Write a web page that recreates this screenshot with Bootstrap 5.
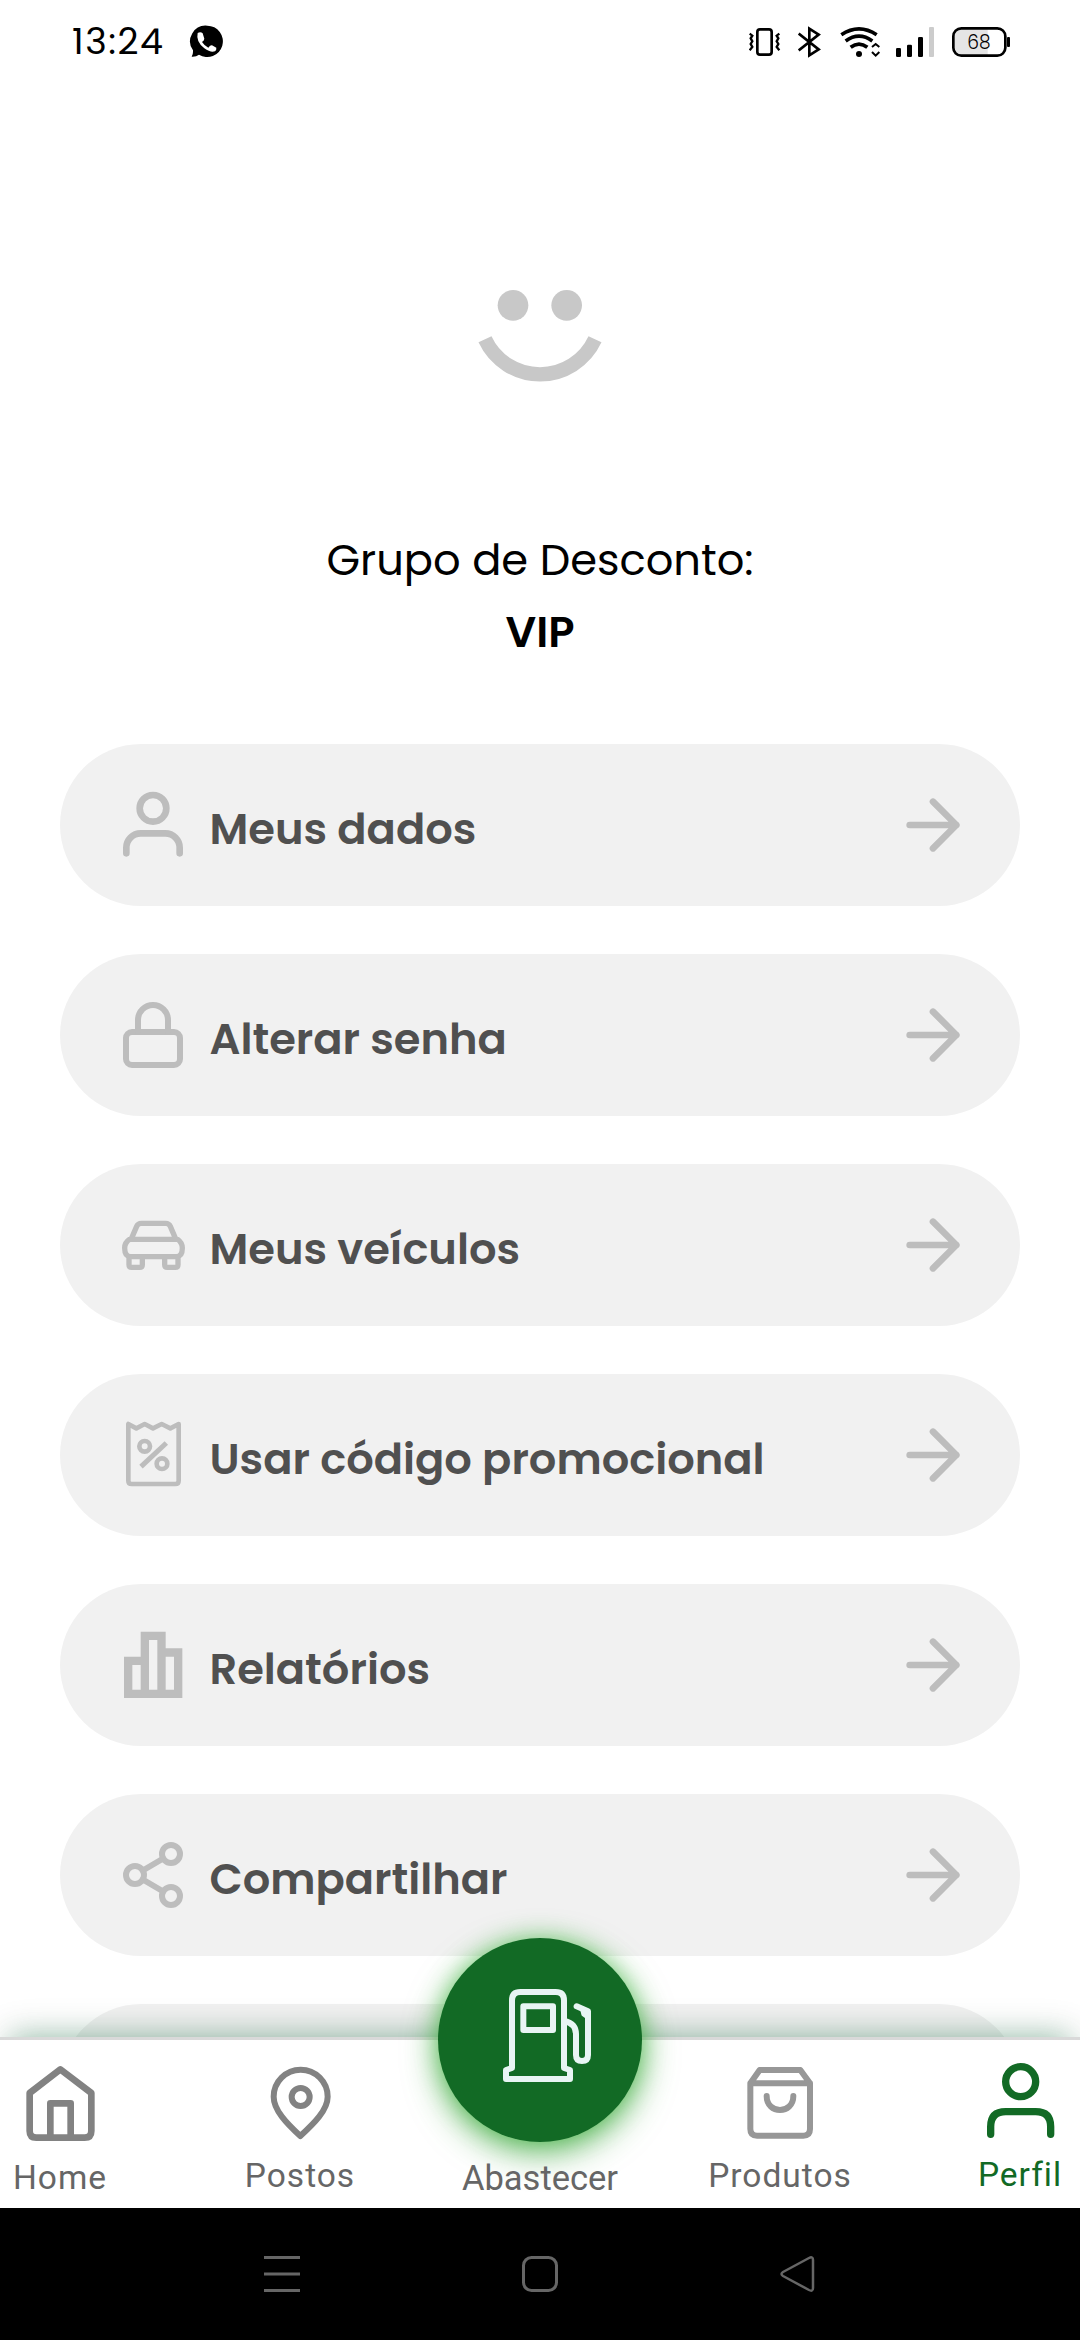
<!DOCTYPE html>
<html lang="pt-BR">
<head>
<meta charset="utf-8">
<meta name="viewport" content="width=device-width, initial-scale=1">
<title>Perfil</title>
<link href="https://cdn.jsdelivr.net/npm/bootstrap@5.3.0/dist/css/bootstrap.min.css" rel="stylesheet">
<style>
body{width:1080px;height:2340px;overflow:hidden;background:#fff;color:#000;font-family:Poppins,Inter,sans-serif}
svg{display:block;flex:none}
.ln{fill:none;stroke:currentColor;stroke-width:2;stroke-linecap:round;stroke-linejoin:round}
.status-bar{height:84px;padding:0 68px 0 72px}
.clock{width:91px;font:400 36.5px/84px Poppins,Inter,sans-serif;letter-spacing:1.5px;white-space:nowrap}
.chat{margin-left:26px}
.page-body{overflow:hidden}
.smile{margin-top:176px}
.group-label{font-size:43.2px;line-height:72px;margin-top:114px;font-weight:400}
.group-name{font-size:43.2px;line-height:72px;font-weight:600}
.menu{padding:0 60px;gap:48px;margin-top:76px}
.menu-row{height:162px;border-radius:81px;background:#f1f1f1;color:#bdbdbd;padding:0 47px 0 53px;text-decoration:none;flex:none}
.menu-text{color:#505050;font-size:43.2px;font-weight:600;line-height:60px;padding-top:8px;margin-left:16.5px;white-space:nowrap}
.tab-bar{height:171px;border-top:3px solid #d9d9d9;background:#fff;box-shadow:0 -12px 28px -12px rgba(0,110,55,.38),0 -4px 40px rgba(0,0,0,.08)}
.tab{width:120px;padding-top:20px;color:#828282}
.tab span{font:400 33.5px/40px Roboto,sans-serif;color:#666;letter-spacing:1px;white-space:nowrap;padding-top:5.5px}
.tab .home-label{padding-top:7.5px}
.tab .fuel-label{font-size:34.5px;letter-spacing:0;padding-top:8px;position:relative}
.tab .profile-label{padding-top:4.5px;color:#126a25}
.fab{left:438px;top:-102px;width:204px;height:204px;background:#126a25;color:#e8f5f4;box-shadow:0 10px 34px rgba(30,150,30,.65),0 0 22px rgba(70,200,70,.5)}
.sys-bar{height:132px;background:#000;color:#666;gap:178px}
</style>
</head>
<body class="d-flex flex-column position-relative">
<header class="status-bar d-flex align-items-start flex-shrink-0">
  <span class="clock">13:24</span>
  <svg class="chat" width="36" height="90" viewBox="446 0 108 270"><path fill="#000" d="M501 77a47 47 0 1 1-25 87q-9 7-22 6 5-8 4-19A47 47 0 0 1 501 77z"/><path fill="#fff" d="M472 99q9-5 15 1l5 16q0 5-7 10 8 12 19 17 6-8 11-7l13 7q1 7-4 11-13 5-32-9-26-20-20-46z"/></svg>
  <div class="d-flex ms-auto">
    <svg width="49" height="90" viewBox="90 0 147 270" fill="none" stroke="#000"><rect x="115" y="88" width="43" height="76" rx="8" stroke-width="8"/><path stroke-width="7" d="M92 101l8 6-5 8 5 9-5 8 5 9-8 10M181 101l-8 6 5 8-5 9 5 8-5 9 8 10"/></svg>
    <svg width="42" height="90" viewBox="237 0 126 270" fill="none" stroke="#000" stroke-width="8"><path d="M239 101l60 47-28 18V86l28 18-60 47"/></svg>
    <svg width="56" height="90" viewBox="363 0 168 270" fill="none" stroke="#000" stroke-width="11"><path d="M367 104q53-35 106 0M380 123q40-29 80 0M395 142q25-19 50 0"/><circle cx="420" cy="162" r="9" fill="#000" stroke="none"/><path stroke-width="6" d="M459 141l11-9 11 9M459 156l11 11 11-11"/></svg>
    <svg width="56" height="90" viewBox="531 0 168 270"><g fill="#000"><rect x="531" y="144" width="15" height="27" rx="4"/><rect x="564" y="134" width="15" height="37" rx="4"/><rect x="597" y="111" width="15" height="60" rx="4"/></g><rect x="630" y="81" width="15" height="90" rx="3" fill="#ccc"/></svg>
    <svg width="60" height="90" viewBox="699 0 180 270"><rect x="703" y="85" width="156" height="82" rx="24" fill="#fff"/><path d="M806 85h-79q-24 0-24 24v34q0 24 24 24h79z" fill="#e5e5e5"/><rect x="703" y="85" width="156" height="82" rx="24" fill="none" stroke="#000" stroke-width="8"/><rect x="864" y="111" width="9" height="30" rx="3"/><text x="780" y="148" text-anchor="middle" font-family="Poppins, Lato, sans-serif" font-weight="300" font-size="61" textLength="70" lengthAdjust="spacingAndGlyphs">68</text></svg>
  </div>
</header>

<main class="page-body flex-grow-1 d-flex flex-column">
  <svg class="smile mx-auto flex-shrink-0" width="200" height="150" viewBox="0 0 600 450"><g fill="#c8c8c8"><circle cx="219" cy="136" r="46"/><circle cx="380" cy="136" r="46"/></g><path d="M135 238A182 182 0 0 0 465 238" fill="none" stroke="#c8c8c8" stroke-width="43"/></svg>
  <div class="group-label text-center">Grupo de Desconto:</div>
  <div class="group-name text-center">VIP</div>
  <nav class="menu d-flex flex-column">
    <a class="menu-row d-flex align-items-center" href="#"><svg class="ln" width="80" height="80" viewBox="0 0 24 24"><path d="M20 20.500v-1.700a4.300 4.300 0 0 0-4.300-4.300H8.300A4.300 4.300 0 0 0 4 18.800v1.700"/><circle cx="12" cy="7" r="4"/></svg><span class="menu-text">Meus dados</span><svg class="ln ms-auto" width="80" height="80" viewBox="0 0 24 24"><path d="M5 12h14M12 5l7 7-7 7"/></svg></a>
    <a class="menu-row d-flex align-items-center" href="#"><svg class="ln mx-1" width="72" height="72" viewBox="0 0 24 24"><rect x="3" y="11" width="18" height="11" rx="2"/><path d="M7 11V7a5 5 0 0 1 10 0v4"/></svg><span class="menu-text">Alterar senha</span><svg class="ln ms-auto" width="80" height="80" viewBox="0 0 24 24"><path d="M5 12h14M12 5l7 7-7 7"/></svg></a>
    <a class="menu-row d-flex align-items-center" href="#"><svg width="80" height="80" viewBox="219 165 240 240" fill="none" stroke="currentColor" stroke-width="16" stroke-linejoin="round"><path d="M273 269l17-40q4-9 14-9h73q10 0 14 9l17 40M269 268h144q14 10 14 26 0 26-18 26H272q-18 0-18-26 0-16 15-26zM267 320v24q0 8 8 8h24q8 0 8-8v-24M374 320v24q0 8 8 8h24q8 0 8-8v-24"/></svg><span class="menu-text">Meus veículos</span><svg class="ln ms-auto" width="80" height="80" viewBox="0 0 24 24"><path d="M5 12h14M12 5l7 7-7 7"/></svg></a>
    <a class="menu-row d-flex align-items-center" href="#"><svg width="80" height="80" viewBox="219 795 240 240" fill="none" stroke="currentColor" stroke-width="14" stroke-linejoin="round"><path d="M265 822v170q0 10 10 10h131q10 0 10-10V822l-25 13-26-13-26 13-25-13-25 13z"/><path d="M303 950l76-71" stroke-width="15"/><circle cx="314" cy="889" r="16"/><circle cx="366" cy="941" r="16"/></svg><span class="menu-text">Usar código promocional</span><svg class="ln ms-auto" width="80" height="80" viewBox="0 0 24 24"><path d="M5 12h14M12 5l7 7-7 7"/></svg></a>
    <a class="menu-row d-flex align-items-center" href="#"><svg width="80" height="80" viewBox="219 165 240 240"><path fill="currentColor" fill-rule="evenodd" d="M252 260h50v-75h75v50h50v149H252zM277 285v74h25v-74zM327 210v149h25V210zM377 260v99h25v-99z"/></svg><span class="menu-text">Relatórios</span><svg class="ln ms-auto" width="80" height="80" viewBox="0 0 24 24"><path d="M5 12h14M12 5l7 7-7 7"/></svg></a>
    <a class="menu-row d-flex align-items-center" href="#"><svg class="ln mx-1" width="72" height="72" viewBox="0 0 24 24"><circle cx="18" cy="5" r="3"/><circle cx="6" cy="12" r="3"/><circle cx="18" cy="19" r="3"/><path d="M8.59 13.51l6.83 3.98M15.41 6.51l-6.82 3.98"/></svg><span class="menu-text">Compartilhar</span><svg class="ln ms-auto" width="80" height="80" viewBox="0 0 24 24"><path d="M5 12h14M12 5l7 7-7 7"/></svg></a>
    <div class="menu-row"></div>
  </nav>
</main>

<footer class="tab-bar position-relative flex-shrink-0">
  <a class="fab rounded-circle position-absolute" href="#" aria-label="Abastecer"><svg width="204" height="204" viewBox="114 84 612 612" fill="none" stroke="currentColor" stroke-width="18" stroke-linejoin="round" stroke-linecap="round"><path d="M336 474V271q0-25 25-25h106q25 0 25 25v203l18 6v27H318v-27z"/><rect x="370" y="289" width="89" height="71"/><path d="M494 333q34 8 34 40v62q0 18 18 18t18-18V304l-34-15"/><path d="M546 296l18 10v17l-14-10z" stroke-width="12" fill="currentColor"/></svg></a>
  <div class="d-flex justify-content-between">
    <div class="tab d-flex flex-column align-items-center"><svg width="80" height="90" viewBox="60 240 240 270" fill="none" stroke="currentColor" stroke-width="20" stroke-linejoin="round"><path d="M89 339l92-71 93 71v114q0 20-20 20H109q-20 0-20-20zM151 473V370h61v103"/></svg><span class="home-label">Home</span></div>
    <div class="tab d-flex flex-column align-items-center"><svg width="80" height="90" viewBox="780 240 240 270" fill="none" stroke="currentColor" stroke-width="18" stroke-linejoin="round"><path d="M901 468C860 430 821 390 821 350a80.500 80.500 0 0 1 162 0c0 40-41 80-82 118z"/><circle cx="902" cy="351" r="27"/></svg><span>Postos</span></div>
    <div class="tab d-flex flex-column align-items-center"><svg width="80" height="90"></svg><span class="fuel-label">Abastecer</span></div>
    <div class="tab d-flex flex-column align-items-center"><svg width="80" height="90" viewBox="180 240 240 270" fill="none" stroke="#979797" stroke-width="18" stroke-linejoin="round" stroke-linecap="round"><path d="M211 310l28-40h122l29 40v137q0 20-20 20H231q-20 0-20-20zM211 310h179M260 348c0 56 80 56 80 0"/></svg><span>Produtos</span></div>
    <div class="tab d-flex flex-column align-items-center"><svg width="80" height="90" viewBox="900 240 240 270" fill="none" stroke="#126a25" stroke-width="22" stroke-linecap="round"><circle cx="1022" cy="305" r="45"/><path d="M932 463v-23q0-45 45-45h90q45 0 45 45v23"/></svg><span class="profile-label">Perfil</span></div>
  </div>
</footer>
<div class="sys-bar d-flex justify-content-center align-items-center flex-shrink-0 position-relative">
  <svg width="80" height="80" viewBox="0 0 80 80" fill="none" stroke="currentColor" stroke-width="3"><path d="M22 23.500h36M22 40h36M22 56.500h36"/></svg>
  <svg width="80" height="80" viewBox="0 0 80 80" fill="none" stroke="currentColor" stroke-width="3"><rect x="23.500" y="23.500" width="33" height="33" rx="8"/></svg>
  <svg width="80" height="80" viewBox="0 0 80 80" fill="none" stroke="currentColor" stroke-width="2.500" stroke-linejoin="round"><path d="M25 38l26-14q4-2 4 2v28q0 4-4 2L25 42q-3-2 0-4z"/></svg>
</div>
<script src="https://cdn.jsdelivr.net/npm/bootstrap@5.3.0/dist/js/bootstrap.bundle.min.js"></script>
</body>
</html>
